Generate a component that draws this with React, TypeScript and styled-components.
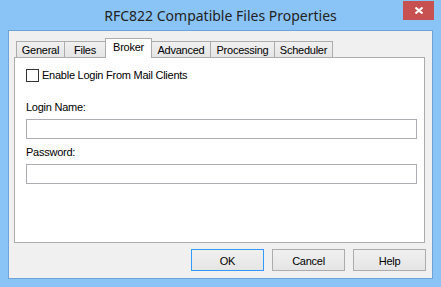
import styled, { createGlobalStyle } from 'styled-components';

const Global = createGlobalStyle`
    html, body {
        margin: 0;
        padding: 0;
        background: #8ac4f7;
    }
    * { box-sizing: border-box; }
`;

const Frame = styled.div`
    width: 441px;
    height: 287px;
    background-color: #8ac4f7;
    padding: 0 8px 8px 8px;
    display: flex;
    flex-direction: column;
    font-family: "Liberation Sans", Arial, sans-serif;
    font-size: 11px;
    letter-spacing: -0.25px;
    color: #000;
`;

const TitleBar = styled.div`
    height: 30px;
    display: grid;
    grid-template-columns: 1fr auto 1fr;
    margin: 0 -8px;
`;

const Title = styled.div`
    grid-column: 2;
    font-family: "Noto Sans", "Open Sans", sans-serif;
    font-size: 14px;
    letter-spacing: 0;
    line-height: 31px;
    color: #222;
    white-space: nowrap;
`;

const CloseBtn = styled.div`
    grid-column: 3;
    justify-self: end;
    margin: 1px 7px 0 0;
    width: 31px;
    height: 19px;
    background-color: #c75050;
    display: flex;
    align-items: center;
    justify-content: center;
`;

const Client = styled.div`
    width: 425px;
    height: 249px;
    border: 1px solid #6fa3d6;
    background-color: #f0f0f0;
    padding-top: 7px;
    display: flex;
    flex-direction: column;
`;

const TabStrip = styled.div`
    height: 19px;
    margin-left: 7px;
    display: flex;
    align-items: flex-end;
`;

const Tab = styled.div<{ $w: number; $active?: boolean }>`
    width: ${(p) => p.$w}px;
    height: ${(p) => (p.$active ? 20 : 16)}px;
    margin-left: -1px;
    margin-bottom: ${(p) => (p.$active ? -1 : 0)}px;
    position: relative;
    z-index: ${(p) => (p.$active ? 2 : 1)};
    border: 1px solid #acacac;
    border-bottom: none;
    background: ${(p) => (p.$active ? '#fff' : 'linear-gradient(#f0f0f0, #e5e5e5)')};
    display: flex;
    justify-content: center;
    padding-top: 2px;
    line-height: 13px;
    &:first-child { margin-left: 0; }
`;

const Panel = styled.div`
    margin-left: 5px;
    width: 411px;
    height: 186px;
    border: 1px solid #acacac;
    background-color: #fff;
    padding: 11px 7px 0 11px;
    display: flex;
    flex-direction: column;
`;

const CheckRow = styled.label`
    display: flex;
    align-items: center;
    height: 13px;
    line-height: 13px;
    gap: 3px;
`;

const Box = styled.span`
    width: 13px;
    height: 13px;
    border: 1px solid #333;
    background-color: #fff;
`;

const FieldLabel = styled.div<{ $top: number }>`
    margin-top: ${(p) => p.$top}px;
    line-height: 14px;
    height: 14px;
    margin-bottom: 5px;
`;

const TextBox = styled.div`
    width: 391px;
    height: 20px;
    border: 1px solid #abadb3;
    background-color: #fff;
`;

const ButtonRow = styled.div`
    margin-top: 6px;
    padding-right: 6px;
    display: flex;
    justify-content: flex-end;
    gap: 8px;
`;

const Button = styled.div<{ $default?: boolean }>`
    width: 73px;
    height: 22px;
    border: 1px solid ${(p) => (p.$default ? '#3399ff' : '#acacac')};
    background: linear-gradient(#f0f0f0, #e5e5e5);
    display: flex;
    align-items: center;
    justify-content: center;
    padding-top: 1px;
`;

const tabs = [
    { label: 'General', w: 49 },
    { label: 'Files', w: 42 },
    { label: 'Broker', w: 47, active: true },
    { label: 'Advanced', w: 60 },
    { label: 'Processing', w: 65 },
    { label: 'Scheduler', w: 59 },
];

function App() {
    return (
        <>
            <Global />
            <Frame>
                <TitleBar>
                    <Title>RFC822 Compatible Files Properties</Title>
                    <CloseBtn>
                        <svg width="8" height="7" viewBox="0 0 8 7">
                            <path d="M0.5 0.5 L7.5 6.5 M7.5 0.5 L0.5 6.5" stroke="#fff" strokeWidth="2" />
                        </svg>
                    </CloseBtn>
                </TitleBar>
                <Client>
                    <TabStrip>
                        {tabs.map((t) => (
                            <Tab key={t.label} $w={t.w} $active={t.active}>{t.label}</Tab>
                        ))}
                    </TabStrip>
                    <Panel>
                        <CheckRow>
                            <Box />
                            Enable Login From Mail Clients
                        </CheckRow>
                        <FieldLabel $top={18}>Login Name:</FieldLabel>
                        <TextBox />
                        <FieldLabel $top={6}>Password:</FieldLabel>
                        <TextBox />
                    </Panel>
                    <ButtonRow>
                        <Button $default>OK</Button>
                        <Button>Cancel</Button>
                        <Button>Help</Button>
                    </ButtonRow>
                </Client>
            </Frame>
        </>
    );
}

export default App;
